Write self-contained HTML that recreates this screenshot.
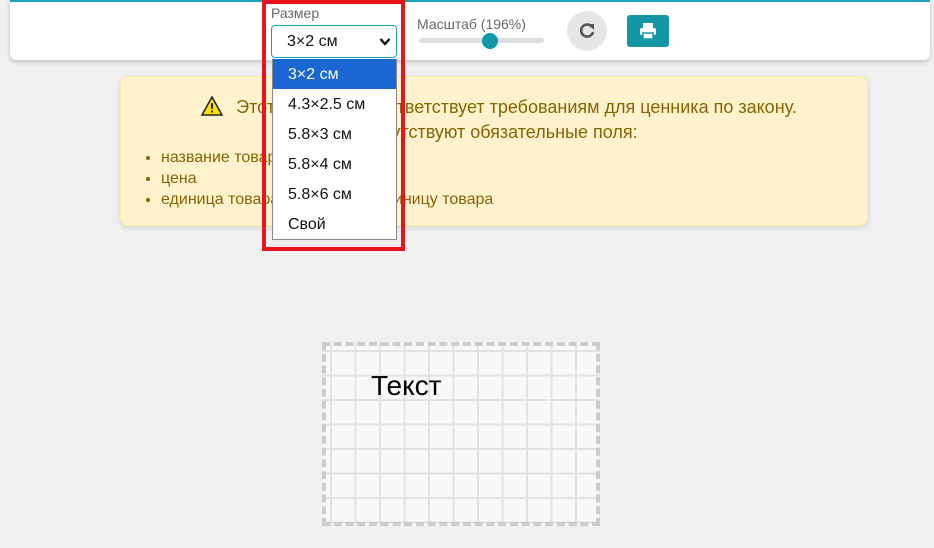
<!DOCTYPE html>
<html><head><meta charset="utf-8"><style>
body{margin:0;width:934px;height:548px;background:#f0f0f0;font-family:"Liberation Sans",sans-serif;position:relative;overflow:hidden}
.hdr{position:absolute;left:10px;top:0;width:920px;height:60px;background:#fff;border-top:2px solid #17a2b8;box-sizing:border-box;border-radius:0 0 6px 6px;box-shadow:0 2px 5px rgba(0,0,0,.2)}
.abs{position:absolute}
.warn{position:absolute;left:120px;top:76px;width:748px;height:150px;box-sizing:border-box;background:#fff2cc;border:1px solid #ffe9a8;border-radius:8px;color:#856404;font-size:16px;box-shadow:0 2px 6px rgba(0,0,0,.12)}
.warn ul{position:absolute;left:0;top:70px;margin:0;padding-left:40px;line-height:21px}
.opt{height:30px;line-height:32px;padding-left:15px;font-size:16px;color:#111}
</style></head><body>
<div class="hdr"></div>
<div class="abs" style="left:271px;top:5px;font-size:14px;color:#666">Размер</div>
<div class="abs" style="left:271px;top:25px;width:126px;height:33px;box-sizing:border-box;border:1px solid #17a2b8;border-radius:4px;background:#fff;font-size:16px;line-height:31px;padding-left:15px;color:#111">3×2 см<svg style="position:absolute;right:5px;top:11px" width="12" height="10" viewBox="0 0 12 10"><path d="M1.5 2L6 7L10.5 2" fill="none" stroke="#111" stroke-width="2.4"/></svg></div>
<div class="abs" style="left:417px;top:16px;font-size:14px;color:#666">Масштаб (196%)</div>
<div class="abs" style="left:419px;top:38px;width:125px;height:5px;border-radius:3px;background:#ddd"></div>
<div class="abs" style="left:482px;top:33px;width:16px;height:16px;border-radius:50%;background:#0e9aa7"></div>
<div class="abs" style="left:567px;top:11px;width:40px;height:40px;border-radius:50%;background:#e6e6e6"></div>
<svg class="abs" style="left:577px;top:21px" width="20" height="20" viewBox="0 0 20 20"><path d="M15 6A6 6 0 1 0 16 11" fill="none" stroke="#555" stroke-width="2.6"/><path d="M11 3L17 3L17 9Z" fill="#555"/></svg>
<div class="abs" style="left:627px;top:15px;width:42px;height:32px;border-radius:3px;background:#1497a4"></div>
<svg class="abs" style="left:638px;top:21px" width="20" height="20" viewBox="0 0 20 20"><rect x="5" y="2" width="10" height="5" fill="#fff"/><rect x="2" y="7" width="16" height="7" rx="2" fill="#fff"/><rect x="5" y="12" width="10" height="6" fill="#fff" stroke="#1497a4" stroke-width="1.5"/></svg>
<div class="warn">
<div class="abs" style="left:4px;top:18px;width:748px;text-align:center;line-height:25px;font-size:18px"><svg style="vertical-align:-3px;margin-right:13px" width="22" height="20" viewBox="0 0 22 20"><path d="M11 1L21 19H1Z" fill="#ffe000" stroke="#222" stroke-width="1.5"/><rect x="10" y="7" width="2" height="6" fill="#222"/><rect x="10" y="14.5" width="2" height="2" fill="#222"/></svg>Этот ценник не соответствует требованиям для ценника по закону.<br>Отсутствуют обязательные поля:</div>
<ul><li>название товара</li><li>цена</li><li>единица товара или цена за единицу товара</li></ul>
</div>
<div class="abs" style="left:262px;top:0;width:143px;height:251px;box-sizing:border-box;border:4px solid #e8151f"></div>
<div class="abs" style="left:272px;top:59px;width:125px;height:181px;background:#fff;border:1px solid #888;border-top:none;box-sizing:border-box">
<div class="opt" style="background:#1a66d3;color:#fff">3×2 см</div>
<div class="opt">4.3×2.5 см</div><div class="opt">5.8×3 см</div><div class="opt">5.8×4 см</div><div class="opt">5.8×6 см</div><div class="opt">Свой</div>
</div>
<div class="abs" style="left:322px;top:342px;width:278px;height:184px;box-sizing:border-box;border:4px dashed #ccc;background-color:#f8f8f8;background-image:linear-gradient(90deg,#e2e2e2 2px,transparent 2px),linear-gradient(#e2e2e2 2px,transparent 2px);background-size:24.5px 24.5px;background-position:4px 4px"></div>
<div class="abs" style="left:371px;top:370px;font-size:28px;color:#000;font-family:'Liberation Sans',sans-serif">Текст</div>
</body></html>
